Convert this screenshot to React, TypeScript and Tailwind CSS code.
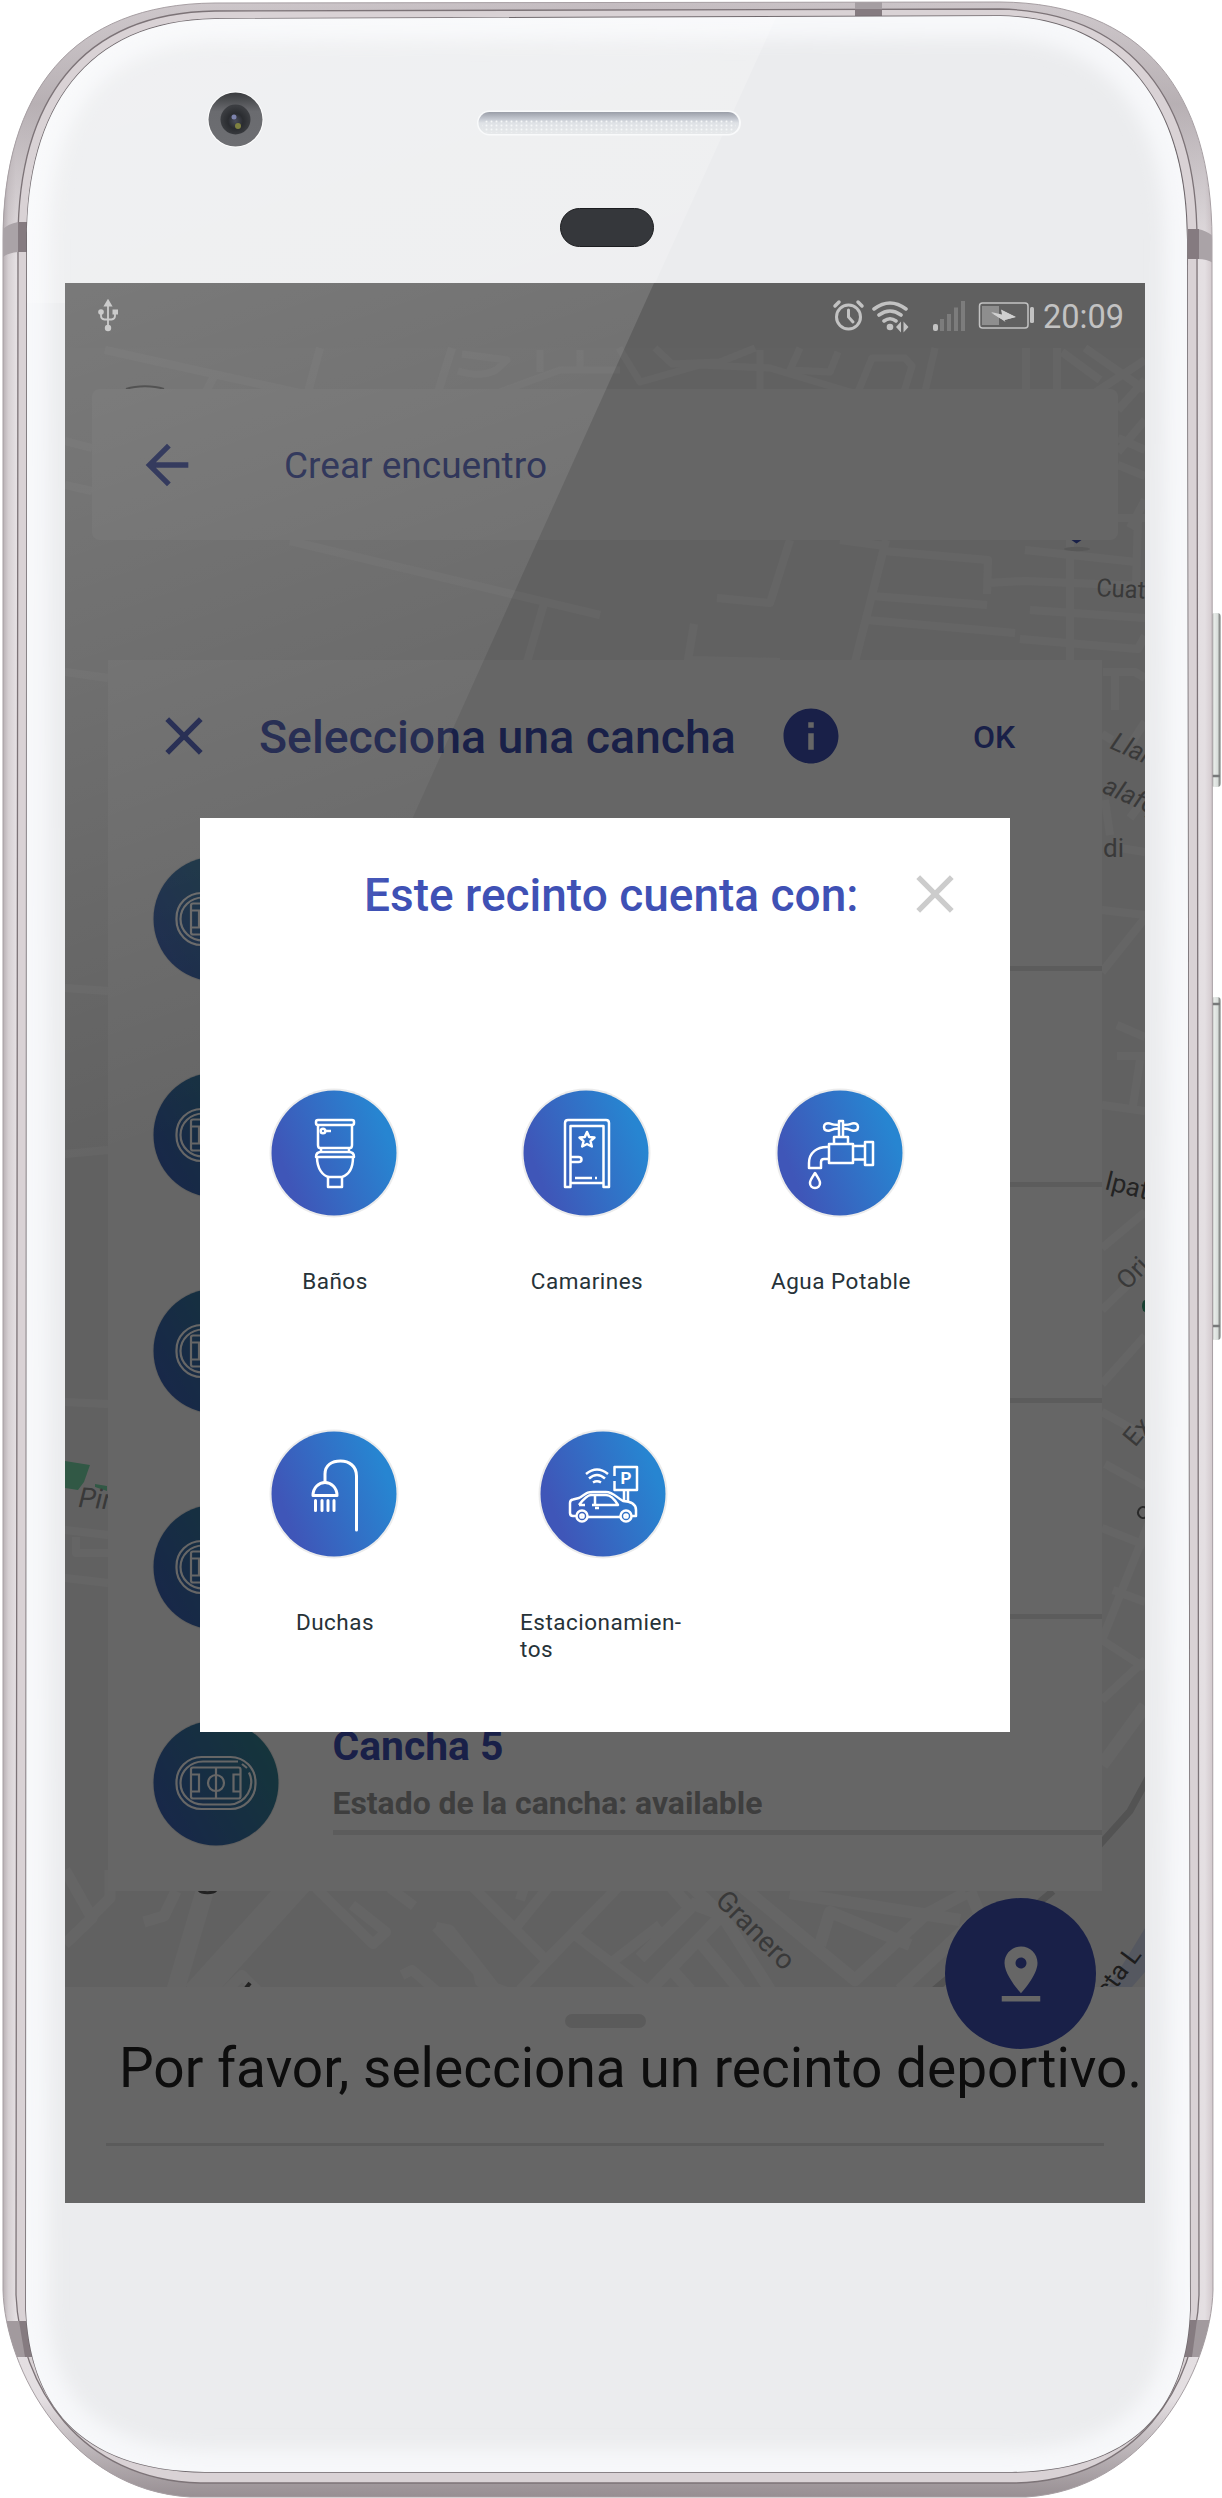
import type { ReactNode } from "react";

/* ---------- Device hull ---------- */
const OUTER =
  "M3 240C3 92 72 4 215 3L1000 2C1143 3 1212 92 1212 240L1213 2290C1211 2370 1146 2490 1026 2497L190 2497C70 2490 5 2370 3 2290Z";
const MIDDLE =
  "M18 240C18 102 80 13 215 11L1000 9C1133 12 1197 102 1197 240L1199 2295C1196 2386 1138 2480 1016 2483L200 2483C80 2480 20 2386 16 2295Z";
const FACE =
  "M27 240C27 110 85 21 215 19L1000 16C1128 19 1187 112 1187 240L1190 2310C1187 2400 1142 2470 1012 2472L205 2472C75 2470 30 2400 26 2310Z";

function Hull() {
  return (
    <svg className="absolute inset-0" width="1222" height="2498" viewBox="0 0 1222 2498" fill="none">
      <defs>
        <linearGradient id="rim" x1="0" y1="0" x2="1222" y2="0" gradientUnits="userSpaceOnUse">
          <stop offset="0.002" stopColor="#b5adb1" />
          <stop offset="0.007" stopColor="#d6d0d3" />
          <stop offset="0.013" stopColor="#e4dfe2" />
          <stop offset="0.5" stopColor="#d3ccd0" />
          <stop offset="0.986" stopColor="#e4dfe2" />
          <stop offset="0.992" stopColor="#d3cace" />
          <stop offset="0.994" stopColor="#b8afb3" />
        </linearGradient>
        <linearGradient id="rimDark" x1="0" y1="2400" x2="0" y2="2498" gradientUnits="userSpaceOnUse">
          <stop offset="0" stopColor="#8f868a" stopOpacity="0" />
          <stop offset="1" stopColor="#8f868a" stopOpacity="0.9" />
        </linearGradient>
        <linearGradient id="rimTop" x1="0" y1="0" x2="0" y2="260" gradientUnits="userSpaceOnUse">
          <stop offset="0" stopColor="#9a9195" stopOpacity="0.25" />
          <stop offset="0.4" stopColor="#9a9195" stopOpacity="0.6" />
          <stop offset="1" stopColor="#9a9195" stopOpacity="0" />
        </linearGradient>
        <filter id="soft" x="-10%" y="-10%" width="120%" height="120%">
          <feGaussianBlur stdDeviation="9" />
        </filter>
        <clipPath id="faceClip">
          <path d={FACE} />
        </clipPath>
        <clipPath id="outerClip">
          <path d={OUTER} />
        </clipPath>
        <linearGradient id="btn" x1="1212" y1="0" x2="1222" y2="0" gradientUnits="userSpaceOnUse">
          <stop offset="0" stopColor="#b9bcba" />
          <stop offset="0.25" stopColor="#e6eae7" />
          <stop offset="0.55" stopColor="#d9dedb" />
          <stop offset="0.75" stopColor="#8c8f8d" />
          <stop offset="1" stopColor="#f0f0f0" />
        </linearGradient>
        <radialGradient id="lens" cx="0.5" cy="0.55" r="0.5">
          <stop offset="0" stopColor="#4a4d5c" />
          <stop offset="0.5" stopColor="#2a2c30" />
          <stop offset="1" stopColor="#3b3d41" />
        </radialGradient>
        <linearGradient id="camRing" x1="0" y1="0" x2="0" y2="1">
          <stop offset="0" stopColor="#393b3e" />
          <stop offset="0.35" stopColor="#6a6b6f" />
          <stop offset="1" stopColor="#6d6e72" />
        </linearGradient>
        <linearGradient id="grille" x1="0" y1="0" x2="0" y2="1">
          <stop offset="0" stopColor="#9a9ea8" />
          <stop offset="0.35" stopColor="#c9cdd5" />
          <stop offset="0.5" stopColor="#dfe2e6" />
          <stop offset="1" stopColor="#e6e8ea" />
        </linearGradient>
        <linearGradient id="faceGlare" x1="0" y1="0" x2="300" y2="900" gradientUnits="userSpaceOnUse">
          <stop offset="0" stopColor="#fff" stopOpacity="0.25" />
          <stop offset="1" stopColor="#fff" stopOpacity="0.1" />
        </linearGradient>
        <pattern id="dots" width="5" height="4" patternUnits="userSpaceOnUse">
          <circle cx="1.5" cy="1.5" r="1" fill="#f6f7f8" />
        </pattern>
      </defs>
      <rect x="1211" y="613" width="10" height="174" rx="4" fill="url(#btn)" />
      <rect x="1211" y="997" width="10" height="343" rx="4" fill="url(#btn)" />
      <path d="M1212 1004h8M1212 1326h8M1212 776h8" stroke="#77797a" strokeWidth="2.5" />
      <path d={OUTER} fill="url(#rim)" />
      <path d={OUTER} fill="url(#rimTop)" />
      <path d={OUTER} fill="url(#rimDark)" />
      <path d={OUTER} stroke="#a79fa3" strokeWidth="1" />
      <path d={MIDDLE} fill="#d9d2d5" stroke="#7c7377" strokeWidth="1.3" />
      <g clipPath="url(#outerClip)">
        <path d="M3 229Q8 224 18 222V252Q8 253 3 257Z" fill="#aaa3a7" />
        <path d="M18 222h9v30h-9z" fill="#857b80" />
        <path d="M1213 236Q1207 231 1198 229V259Q1207 259 1213 263Z" fill="#aaa3a7" />
        <path d="M1188 229h11v30h-11z" fill="#857b80" />
        <path d="M855 0h27v10h-27z" fill="#a59ea2" />
        <path d="M855 9h27v8h-27z" fill="#857b80" />
        <path d="M2 2321h21l5 36H8z" fill="#a29a9e" />
        <path d="M19 2321h9l7 36h-10z" fill="#857b80" />
        <path d="M1214 2320h-20l-6 37h20z" fill="#a29a9e" />
        <path d="M1197 2320h-9l-6 37h10z" fill="#857b80" />
      </g>
      <path d={FACE} fill="#ebecee" stroke="#6f686c" strokeWidth="1.6" />
      <g clipPath="url(#faceClip)">
        <path d={FACE} stroke="#f7f8fa" strokeWidth="44" filter="url(#soft)" />
        <path d="M0 0H784L646 303L0 303Z" fill="url(#faceGlare)" />
      </g>
      <ellipse cx="235.5" cy="119.5" rx="28" ry="28" fill="#fff" />
      <circle cx="235.5" cy="119.5" r="27" fill="url(#camRing)" />
      <circle cx="235.5" cy="119.5" r="15" fill="url(#lens)" />
      <circle cx="234" cy="117" r="2.5" fill="#7d83ad" />
      <circle cx="238" cy="126" r="3" fill="#7f8140" />
      <rect x="477" y="110.500" width="264" height="25" rx="12.500" fill="#f9fafb" />
      <rect x="478.500" y="112" width="260.500" height="22" rx="11" fill="url(#grille)" />
      <rect x="482" y="120" width="254" height="13" rx="6" fill="url(#dots)" />
      <rect x="560.500" y="208.500" width="93" height="38" rx="19" fill="#35373b" stroke="#1c1d20" strokeWidth="1" />
    </svg>
  );
}

/* ---------- Map behind the cards ---------- */
function StreetMap() {
  return (
    <svg className="absolute inset-0" width="1080" height="1920" viewBox="65 283 1080 1920" fill="none">
      <rect x="65" y="283" width="1080" height="65" fill="#f0f0f0" />
      <rect x="65" y="348" width="1080" height="1855" fill="#f3f3f3" />
      <g stroke="#fdfdfd" strokeWidth="8" strokeLinejoin="round">
        <path d="M105 350L304 394M320 348L308 392M214 376L206 392M452 348L438 392" />
        <path d="M462 354L507 360L496 370Q480 378 458 371M500 392L560 370H620M540 350V372M580 350V368M619 348L640 382L700 365L770 368L860 395" strokeWidth="7" />
        <path d="M655 348L672 364L720 362L755 348M800 348L790 370L830 372L838 352M858 392L872 358H905L912 366L904 392M935 348L925 392M760 350V392" strokeWidth="7" />
        <path d="M1026 348V392M1057 348V392M1062 352L1100 380M1145 420L1118 452M1145 360L1096 392M1085 348L1145 390" />
        <path d="M1118 410L1145 380M1118 438L1145 450M1118 465L1145 476M1118 518H1145M1138 518L1136 585M1145 500L1130 528" />
        <path d="M65 441L92 448M65 485L92 491M65 672L108 678M65 988L108 991M65 1154L108 1150M65 1402L108 1404M65 1530L108 1535M65 1578L108 1583" />
        <path d="M76 1537V1553H108" />
        <path d="M290 541L600 615M545 600L527 662M790 540L770 603L717 598M886 540L855 662M884 551L988 560L987 594M872 596L987 605M867 620L1015 633M987 583L1025 581L1145 586M1025 550L1136 562M1030 610L1145 618M1020 639L1138 649L1145 636" />
        <path d="M1070 540V662M694 624L688 660L780 662M1103 672H1135L1145 678M1115 676V710M1145 722L1132 742M1102 734L1112 740M1145 798L1130 818M840 540L885 546" />
        <path d="M1102 910L1145 915M1102 972L1145 918M1102 1105L1145 1111M1140 1060L1132 1112M1117 1025L1145 1037M1117 1056L1145 1056M1102 1248L1145 1212M1102 1310L1145 1268M1102 1384L1145 1336M1102 1412L1145 1436M1105 1464L1145 1486M1102 1528L1145 1545M1102 1640L1150 1520M1113 1590L1145 1602M1102 1640L1145 1668M1102 1700L1145 1660M1110 835L1105 800M1120 848L1145 852" />
        <path d="M65 1870L92 1918L65 1944M92 1916L110 1898V1870M176 1891L164 1916L144 1922" strokeWidth="11" />
        <path d="M208 1880L174 1995" strokeWidth="18" />
        <path d="M300 1880L196 1995" strokeWidth="28" />
        <path d="M316 1888L373 1944L386 1932L352 1905M390 1888L414 1906M466 1880L546 1960L620 1885M512 1932L550 1885M525 1885L520 1900M520 1990L620 1885L660 1875M575 1935L660 2000M612 1962L660 1925M436 1927L478 1972L480 1982L512 1994M436 1927L450 1930L500 1994M402 1975L412 1970L440 1994M222 1995L242 1975L258 1991" strokeWidth="10" />
        <path d="M640 1958L690 1908L670 1885M650 1990L722 1915L690 1885M690 1903L722 1915L770 1990M740 1885L855 1980L925 1915L966 1893M820 1945L830 1912L910 1945M790 1893L960 1920M700 1942L740 1990M672 1970L690 1990M900 1990L980 1915L970 1891" strokeWidth="12" />
        <path d="M1102 1765L1145 1706" strokeWidth="13" />
      </g>
      <path d="M1095 1850L1130 1811L1148 1778M1053 1891L934 1990" stroke="#cfcfcf" strokeWidth="7" />
      <path d="M65 1461L90 1465L84 1482L78 1490L65 1488Z" fill="#7cdcac" />
      <path d="M95 1484l12 2v5l-12-4z" fill="#7cdcac" />
      <path d="M1145 1300a3 6 0 0 0 0 12z" fill="#3ba17c" />
      <path d="M1109 1987L1145 1928V1972L1132 1987Z" fill="#d5dbef" />
      <path d="M126 389a30 12 0 0 1 38 0" stroke="#8a8a8a" strokeWidth="2" fill="#fff" />
      <path d="M1070 539h13l-6.500 4.500z" fill="#3f51b5" />
      <ellipse cx="1077" cy="549" rx="13" ry="2.200" fill="#dcdcdc" />
      <path d="M199 1890a9 4 0 0 0 17 0" stroke="#555" strokeWidth="3" />
      <path d="M246 1988l4-5" stroke="#555" strokeWidth="4" />
      <g fill="#909090" fontFamily="Roboto, sans-serif" fontSize="26">
        <text x="1096" y="596" fontSize="25" textLength="49" lengthAdjust="spacingAndGlyphs" transform="rotate(3 1096 596)">Cuat</text>
        <text x="1109" y="748" fontStyle="italic" transform="rotate(24 1109 748)">Llan</text>
        <text x="1101" y="792" fontStyle="italic" transform="rotate(24 1101 792)">alafq</text>
        <text x="1103" y="857">di</text>
        <text x="1104" y="1189" fill="#5a5a5a" transform="rotate(14 1104 1189)">lpat</text>
        <text x="1127" y="1291" transform="rotate(-45 1127 1291)">Ori</text>
        <text x="1135" y="1448" transform="rotate(-50 1135 1448)">Ex</text>
        <path d="M1146 1508a5 5.500 0 1 0 0 9" stroke="#666" strokeWidth="2" fill="none" />
        <text x="78" y="1507" fontSize="28" fontStyle="italic" transform="rotate(4 78 1507)">Pin</text>
        <text x="714" y="1902" fontSize="28" transform="rotate(45 714 1902)">Granero</text>
        <text x="1108" y="2000" fill="#4a4a4a" transform="rotate(-53 1108 2000)">cta L</text>
      </g>
    </svg>
  );
}

/* ---------- Icons ---------- */
function StatusIcons() {
  return (
    <svg width="206" height="36" viewBox="832 298 206 36" fill="none">
      <g stroke="#c2c2c2" strokeLinecap="round">
        <circle cx="848.500" cy="317" r="12" strokeWidth="3" />
        <path d="M848.500 310v7l4.500 5" strokeWidth="3" />
        <path d="M835 306l4-4M862 306l-4-4" strokeWidth="3.500" />
        <path d="M874 309q16-12 32 0M879 315q11-8 22 0M884 321q6-4.500 12 0" strokeWidth="3.600" />
      </g>
      <circle cx="890" cy="327" r="3.300" fill="#c2c2c2" />
      <path d="M901 321.500v11l-5-5.500zM903.500 321.500v11l5-5.500z" fill="#c2c2c2" />
      <rect x="933" y="324" width="5" height="7" rx="2" fill="#c2c2c2" />
      <path d="M942 331v-12M949 331v-17M956 331v-23.500M963 331v-30" stroke="#7c7c7c" strokeWidth="4" />
      <rect x="979.500" y="303" width="48.500" height="25" rx="3" stroke="#c2c2c2" strokeWidth="1.500" />
      <rect x="982" y="306" width="17" height="19" fill="#8e8e8e" />
      <path d="M991.500 313L1003 316L1002 310.500L1015.500 317L1004.500 320L1003.500 315.500L1005 320.500L999.500 318Z" fill="#d0d0d0" />
      <path d="M991 312l11 2.500-1-5 15 7.500-11.500 3 1 2z" fill="#d0d0d0" />
      <rect x="1030" y="307" width="4" height="16" rx="1.500" fill="#c2c2c2" />
    </svg>
  );
}

function UsbIcon() {
  return (
    <svg width="22" height="34" viewBox="0 0 22 34" fill="none" stroke="#c2c2c2" strokeWidth="1.800">
      <path d="M11 4v26M4 14v3q0 3 3.500 3.500h7Q18 20 18 17v-3" />
      <path d="M11 1.500l3 5H8z" fill="#c2c2c2" />
      <circle cx="4" cy="13" r="2.800" fill="#c2c2c2" stroke="none" />
      <path d="M15.500 10.500h5.500v5h-5.500z" fill="#c2c2c2" stroke="none" />
      <circle cx="11" cy="29" r="3.200" fill="#c2c2c2" stroke="none" />
    </svg>
  );
}

function ArrowBack() {
  return (
    <svg width="64" height="64" viewBox="0 0 24 24" fill="#3f51b5">
      <path d="M20 11H7.830l5.590-5.590L12 4l-8 8 8 8 1.410-1.410L7.830 13H20v-2z" />
    </svg>
  );
}

function CloseIcon({ color }: { color: string }) {
  return (
    <svg width="64" height="64" viewBox="0 0 24 24" fill={color}>
      <path d="M19 6.410L17.590 5 12 10.590 6.410 5 5 6.410 10.590 12 5 17.590 6.410 19 12 13.410 17.590 19 19 17.590 13.410 12z" />
    </svg>
  );
}

function InfoIcon() {
  return (
    <svg width="66" height="66" viewBox="0 0 24 24" fill="#3f51b5">
      <path d="M12 2C6.480 2 2 6.480 2 12s4.480 10 10 10 10-4.480 10-10S17.520 2 12 2zm1 15h-2v-6h2v6zm0-8h-2V7h2v2z" />
    </svg>
  );
}

function FieldBadge() {
  return (
    <svg className="shrink-0" width="128" height="128" viewBox="0 0 128 128" fill="none">
      <defs>
        <linearGradient id="fieldFill" x1="0" y1="0.800" x2="1" y2="0.250">
          <stop offset="0.100" stopColor="#3c65b4" />
          <stop offset="0.950" stopColor="#358496" />
        </linearGradient>
      </defs>
      <circle cx="64" cy="64" r="63.500" fill="#eeeeee" />
      <circle cx="64" cy="64" r="62.500" fill="url(#fieldFill)" />
      <g stroke="#fff" strokeWidth="2.200">
        <rect x="24.500" y="38" width="79" height="52" rx="25" />
        <path d="M86 42.500H51a22.500 21.500 0 0 0 0 43h27a22.500 22.500 0 0 0 19-32M90 45l5 4" />
        <rect x="39" y="48.500" width="49.500" height="31" rx="2" />
        <path d="M64 48.500v31M39 55.500h8v17h-8M88.500 55.500h-7v17h7" />
        <ellipse cx="64" cy="64" rx="8" ry="8" />
      </g>
    </svg>
  );
}

function Badge({ children }: { children: ReactNode }) {
  return (
    <svg className="shrink-0" width="130" height="130" viewBox="-65 -65 130 130" fill="none">
      <defs>
        <linearGradient id="amenityFill" x1="0" y1="0.720" x2="1" y2="0.320">
          <stop offset="0.120" stopColor="#3f56b8" />
          <stop offset="0.920" stopColor="#2785d1" />
        </linearGradient>
      </defs>
      <circle r="64.500" fill="#ececec" />
      <circle r="62.500" fill="url(#amenityFill)" />
      <g stroke="#fff" strokeWidth="2.500" strokeLinejoin="round">{children}</g>
    </svg>
  );
}

const toilet = (
  <>
    <rect x="-18" y="-33" width="38" height="5" rx="2" />
    <path d="M-16-28v20q0 3 2 3h30q2 0 2-3v-20M-13-5v4M15-5v4" />
    <circle cx="-11" cy="-22" r="2.300" />
    <path d="M-8-22h5" />
    <path d="M-18 4q0-5 5-5h28q5 0 5 5zM-17 4c0 12 6 19 12 20h13C14 22 19 16 19 4M-6 23v11H8V23" />
  </>
);
const door = (
  <>
    <path d="M-21 34v-64q0-3 3-3h38q3 0 3 3v64h-5.500v-61h-33V34z" />
    <path d="M-15.500 30h33M-15.500 4h8q3 0 3 2.500t-3 2.500h-8M-11 25H6M9 25h2" />
    <path d="M1-21l2.200 5 5.300.500-4 3.700 1.300 5.300L1-9l-4.800 2.500 1.300-5.300-4-3.700 5.300-.500z" />
  </>
);
const faucet = (
  <>
    <path d="M-11-9h24v19h-24zM-6-9v-7H8v7M-1-16v-16h4v16" />
    <path d="M3-28q6 0 9-1.500 6-1 6 3.500t-6 3.500Q8-24.500 3-24.500M-1-28q-6 0-9-1.500-6-1-6 3.500t6 3.500q4-2 9-2" />
    <path d="M13-7h12M13 6.500h12M25-11h8v23h-8zM-11-6c-12-1-20 6-20 16v5h12V9q0-3 3-3h5" />
    <path d="M-25 20c3 5 5 7 5 10a5 5 0 0 1-10 0c0-3 2-5 5-10z" />
  </>
);
const shower = (
  <g strokeWidth="3" strokeLinecap="round">
    <path d="M-9-12v-8c0-9 7-13 15.500-13S22.500-28 22.500-18v54" />
    <path d="M-21 1.500c0-8 6-13 12-13s12 5 12 13z" />
    <path d="M-18.500 6.500v10M-12 6.500v10M-6 6.500v10M0 6.500v10" />
  </g>
);
const car = (
  <>
    <path d="M-27 22h-3q-3 0-3-3V9q0-3 3-3.500l6-1.500C-16-1-16-2-10-2h13c7 0 10 5 17 9 8 .500 13 3 13 9v6h-4M-15 23H17" />
    <path d="M-24 11c3-4 8-10 12-10H3c5 0 9 5 12 10h-26M-24 11h6M-8 1v10M-8 14h4" />
    <circle cx="-21" cy="22" r="5.500" />
    <circle cx="-21" cy="22" r="1.600" />
    <circle cx="23" cy="22" r="5.500" />
    <circle cx="23" cy="22" r="1.600" />
    <path d="M21 7V-4M25 7V-4M11.500-18v-9H34v23H11.500V-13M-17-20q11-9 22 0M-14-15.500q8-7 16 0M-10-11.500q4-2.500 8 0" />
    <text x="17.500" y="-10" fill="#fff" stroke="none" fontFamily="Roboto, sans-serif" fontWeight="700" fontSize="17">
      P
    </text>
  </>
);

/* ---------- Amenity tiles ---------- */
function Amenity({ icon, label, narrow }: { icon: ReactNode; label: string; narrow?: boolean }) {
  return (
    <div className={narrow ? "ml-[60px] flex w-[165px] flex-col items-center" : "flex w-[252px] flex-col items-center"}>
      <Badge>{icon}</Badge>
      <div
        className={
          narrow
            ? "mt-[50px] w-full text-[22.500px] leading-[27px] tracking-[0.5px] whitespace-pre-line text-[#263238]"
            : "mt-[50px] pl-[2px] text-[22.500px] leading-[27px] tracking-[0.5px] whitespace-nowrap text-[#263238]"
        }
      >
        {label}
      </div>
    </div>
  );
}

/* Rows whose text lies wholly behind the dialog carry no caption. */
const courts: { id: number; name?: string; status?: string }[] = [
  { id: 1 },
  { id: 2 },
  { id: 3 },
  { id: 4 },
  { id: 5, name: "Cancha 5", status: "Estado de la cancha: available" },
];

export default function App() {
  return (
    <div className="relative flex h-[2498px] w-[1222px] overflow-hidden bg-white pt-[283px] pl-[65px] font-[Roboto,sans-serif]">
      <Hull />
      <div className="relative h-[1920px] w-[1080px] overflow-hidden bg-[#f3f3f3]">
        <StreetMap />

        <div className="relative flex h-full flex-col">
          <header className="mt-[106px] ml-[27px] flex h-[151px] w-[1026px] items-center rounded-lg bg-white pl-[43px]">
            <ArrowBack />
            <h1 className="mt-[2px] ml-[85px] text-[37px] leading-[44px] whitespace-nowrap text-[#3f51b5]">Crear encuentro</h1>
          </header>

          <section className="mt-[120px] ml-[43px] h-[1231px] w-[994px] bg-white">
            <div className="flex h-[151px] items-center">
              <div className="ml-[44px] flex">
                <CloseIcon color="#3f51b5" />
              </div>
              <h2 className="mt-[2px] ml-[43px] w-[490px] text-[46.400px] leading-[54px] font-medium whitespace-nowrap text-[#3f51b5]">
                Selecciona una cancha
              </h2>
              <div className="ml-[29px]">
                <InfoIcon />
              </div>
              <button className="mt-[2px] ml-[129px] text-[32px] leading-[40px] font-medium text-[#3f51b5]">OK</button>
            </div>
            <ul>
              {courts.map((court) => (
                <li key={court.id} className="flex h-[216px] pt-[44px] pl-[43.500px]">
                  <FieldBadge />
                  <div className="ml-[53px] flex h-[116px] flex-1 flex-col border-b-[5px] border-[#e6e6e6] font-bold">
                    <div className="mt-[3px] h-[48px] text-[40.800px] leading-[48px] text-[#3f51b5]">{court.name}</div>
                    <div className="mt-[15px] h-[36px] text-[31.900px] leading-[36px] text-[#9b9b9b]">{court.status}</div>
                  </div>
                </li>
              ))}
            </ul>
          </section>

          <section className="relative mt-24 h-[216px] bg-white pt-[27px]">
            <div className="mx-auto h-3.5 w-[81px] rounded-full bg-[#e4e4e4]" />
            <p className="mt-[8px] pl-[54px] text-[55px] leading-[64px] whitespace-nowrap text-[#212121]">
              Por favor, selecciona un recinto deportivo.
            </p>
            <div className="mt-[43px] mr-[41px] ml-[41px] h-[3px] bg-[#e4e4e4]" />
            <div className="absolute top-[-89px] right-[49px] flex size-[151px] items-center justify-center rounded-full bg-[#3f51b5]">
              <svg width="66" height="66" viewBox="0 0 24 24" fill="#fff">
                <path d="M18 8c0-3.310-2.690-6-6-6S6 4.690 6 8c0 4.500 6 11 6 11s6-6.500 6-11zm-8 0c0-1.100.900-2 2-2s2 .900 2 2-.890 2-2 2c-1.100 0-2-.900-2-2zM5 20v2h14v-2H5z" />
              </svg>
            </div>
          </section>
        </div>

        <div className="absolute inset-0 bg-black/60" />

        <div className="absolute inset-x-0 top-0 flex h-[65px] items-center pl-[32px] text-[#c2c2c2]">
          <UsbIcon />
          <div className="ml-[713px] flex">
            <StatusIcons />
          </div>
          <span className="mt-[2px] ml-[5px] text-[32.600px] leading-[40px]">20:09</span>
        </div>

        <div className="absolute top-[535px] left-[135px] flex h-[914px] w-[810px] flex-col bg-white">
          <div className="flex h-[151px] items-center">
            <h3 className="mt-[2px] ml-[164px] w-[494px] text-[46px] leading-[54px] font-medium whitespace-nowrap text-[#3f51b5]">
              Este recinto cuenta con:
            </h3>
            <div className="ml-[45px]">
              <CloseIcon color="#cccccc" />
            </div>
          </div>
          <div className="mt-[119px] flex h-[341px] pl-[8px]">
            <Amenity icon={toilet} label="Baños" />
            <Amenity icon={door} label="Camarines" />
            <div className="ml-[2px]">
              <Amenity icon={faucet} label="Agua Potable" />
            </div>
          </div>
          <div className="flex pl-[8px]">
            <Amenity icon={shower} label="Duchas" />
            <Amenity icon={car} label={"Estacionamien-\ntos"} narrow />
          </div>
        </div>

        <svg className="pointer-events-none absolute inset-0" width="1080" height="1920" viewBox="65 283 1080 1920">
          <defs>
            <linearGradient id="glare" x1="65" y1="283" x2="345" y2="1080" gradientUnits="userSpaceOnUse">
              <stop offset="0" stopColor="#fff" stopOpacity="0.160" />
              <stop offset="1" stopColor="#fff" stopOpacity="0" />
            </linearGradient>
          </defs>
          <path d="M65 283H654L150 1400H65Z" fill="url(#glare)" />
        </svg>
      </div>
    </div>
  );
}
